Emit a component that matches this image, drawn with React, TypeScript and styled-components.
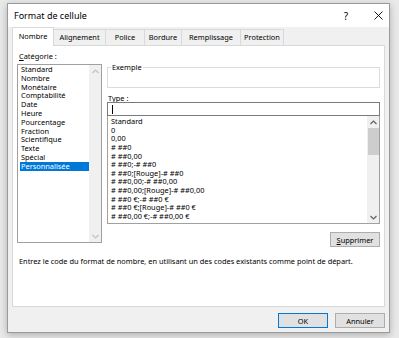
import React from 'react'
import styled, { createGlobalStyle } from 'styled-components'

const categories = [
  'Standard',
  'Nombre',
  'Monétaire',
  'Comptabilité',
  'Date',
  'Heure',
  'Pourcentage',
  'Fraction',
  'Scientifique',
  'Texte',
  'Spécial',
  'Personnalisée',
]

const formats = [
  'Standard',
  '0',
  '0,00',
  '# ##0',
  '# ##0,00',
  '# ##0;-# ##0',
  '# ##0;[Rouge]-# ##0',
  '# ##0,00;-# ##0,00',
  '# ##0,00;[Rouge]-# ##0,00',
  '# ##0 €;-# ##0 €',
  '# ##0 €;[Rouge]-# ##0 €',
  '# ##0,00 €;-# ##0,00 €',
]

// widths read off the reference, borders overlap by 1px
const tabs = [
  { label: 'Nombre', width: 42 },
  { label: 'Alignement', width: 53 },
  { label: 'Police', width: 40 },
  { label: 'Bordure', width: 38 },
  { label: 'Remplissage', width: 60 },
  { label: 'Protection', width: 44 },
]

const Chevron = ({ up, color }: { up?: boolean; color: string }) => (
  <svg width="7" height="5" viewBox="0 0 7 5">
    <path
      d={up ? 'M0.5 4 L3.5 1 L6.5 4' : 'M0.5 1 L3.5 4 L6.5 1'}
      fill="none"
      stroke={color}
      strokeWidth="1.2"
    />
  </svg>
)

const App = () => {
  return (
    <>
      <GlobalStyle />
      <Window>
        <TitleBar>
          <Title>Format de cellule</Title>
          <TitleButton>?</TitleButton>
          <TitleButton>
            <svg width="9" height="9" viewBox="0 0 9 9">
              <path d="M0.5 0.5 L8.5 8.5 M8.5 0.5 L0.5 8.5" stroke="#000" strokeWidth="0.9" />
            </svg>
          </TitleButton>
        </TitleBar>
        <Body>
          <TabRow>
            {tabs.map((t, i) => (
              <Tab key={t.label} active={i === 0} w={t.width}>{t.label}</Tab>
            ))}
          </TabRow>
          <Panel>
            <Columns>
              <LeftColumn>
                <Label><u>C</u>atégorie :</Label>
                <CategoryList>
                  <Items>
                    {categories.map((c, i) => (
                      <CategoryItem key={c} selected={i === categories.length - 1}>{c}</CategoryItem>
                    ))}
                  </Items>
                  <Scrollbar>
                    <Arrow><Chevron up color="#c2c2c2" /></Arrow>
                    <Track />
                    <Arrow><Chevron color="#c2c2c2" /></Arrow>
                  </Scrollbar>
                </CategoryList>
              </LeftColumn>
              <RightColumn>
                <Sample>
                  <SampleLegend>Exemple</SampleLegend>
                  <SampleBody />
                </Sample>
                <TypeLabel>T<u>y</u>pe :</TypeLabel>
                <TypeInput>
                  <Caret />
                </TypeInput>
                <FormatList>
                  <FormatItems>
                    {formats.map(f => (
                      <FormatItem key={f}>{f}</FormatItem>
                    ))}
                  </FormatItems>
                  <Scrollbar>
                    <Arrow><Chevron up color="#606060" /></Arrow>
                    <Track>
                      <Thumb />
                    </Track>
                    <Arrow><Chevron color="#606060" /></Arrow>
                  </Scrollbar>
                </FormatList>
                <DeleteButton><u>S</u>upprimer</DeleteButton>
              </RightColumn>
            </Columns>
            <Info>
              Entrez le code du format de nombre, en utilisant un des codes existants comme point de départ.
            </Info>
          </Panel>
          <Footer>
            <Button primary>OK</Button>
            <Button>Annuler</Button>
          </Footer>
        </Body>
      </Window>
    </>
  )
}

const GlobalStyle = createGlobalStyle`
  html, body {
    margin: 0;
    padding: 0;
    background: #e9e9e9;
  }
  body {
    width: 399px;
    height: 338px;
    overflow: hidden;
    font-family: "Noto Sans", "Open Sans", sans-serif;
    font-size: 7.4px;
    color: #000;
  }
`
const Window = styled.div`
  margin: 3px 0 0 7px;
  width: 383px;
  height: 330px;
  box-sizing: border-box;
  border: 1px solid #9a9a9a;
  background: #f0f0f0;
  box-shadow: 0 2px 7px rgba(0, 0, 0, 0.25);
  display: flex;
  flex-direction: column;
`
const TitleBar = styled.div`
  height: 23px;
  flex: none;
  background: #fff;
  display: flex;
  align-items: center;
  padding: 0 1px 0 6px;
  gap: 12px;
`
const Title = styled.div`
  flex: 1;
  font-size: 9px;
`
const TitleButton = styled.div`
  width: 20px;
  display: flex;
  justify-content: center;
  font-size: 10px;
`
const Body = styled.div`
  flex: 1;
  display: flex;
  flex-direction: column;
  padding: 0 4px;
`
const TabRow = styled.div`
  display: flex;
  align-items: flex-end;
  height: 18px;
`
const Tab = styled.div<{ active?: boolean; w: number }>`
  position: relative;
  z-index: ${p => (p.active ? 1 : 0)};
  width: ${p => p.w}px;
  height: ${p => (p.active ? 19 : 16)}px;
  margin-bottom: ${p => (p.active ? -1 : 0)}px;
  margin-left: -1px;
  &:first-child {
    margin-left: 0;
  }
  box-sizing: border-box;
  border: 1px solid #d9d9d9;
  border-bottom: none;
  background: ${p => (p.active ? '#fff' : '#f0f0f0')};
  display: flex;
  align-items: center;
  justify-content: center;
  line-height: 1;
`
const Panel = styled.div`
  height: 262px;
  box-sizing: border-box;
  border: 1px solid #d9d9d9;
  background: #fff;
  padding: 5px 4px 0 4px;
`
const Columns = styled.div`
  display: flex;
  gap: 5px;
`
const LeftColumn = styled.div`
  width: 85px;
  display: flex;
  flex-direction: column;
`
const Label = styled.div`
  line-height: 10px;
  padding-left: 2px;
`
const CategoryList = styled.div`
  margin-top: 3px;
  height: 179px;
  box-sizing: border-box;
  border: 1px solid #a0a0a0;
  display: flex;
`
const Items = styled.div`
  flex: 1;
  padding-left: 2px;
  overflow: hidden;
`
const CategoryItem = styled.div<{ selected?: boolean }>`
  line-height: 8.8px;
  height: 8.8px;
  padding-left: 1px;
  white-space: nowrap;
  background: ${p => (p.selected ? '#0078d7' : 'transparent')};
  color: ${p => (p.selected ? '#fff' : '#000')};
`
const Scrollbar = styled.div`
  width: 12px;
  flex: none;
  background: #f0f0f0;
  display: flex;
  flex-direction: column;
`
const Arrow = styled.div`
  height: 12px;
  display: flex;
  align-items: center;
  justify-content: center;
`
const Track = styled.div`
  flex: 1;
`
const Thumb = styled.div`
  height: 27px;
  margin: 0 0 0 1px;
  background: #cdcdcd;
`
const RightColumn = styled.div`
  width: 273px;
  display: flex;
  flex-direction: column;
`
const Sample = styled.fieldset`
  margin: 11px 0 0;
  padding: 0;
  min-inline-size: 0;
  border: 1px solid #dcdcdc;
`
const SampleLegend = styled.legend`
  margin-left: 3px;
  padding: 0 1px;
  line-height: 10px;
`
const SampleBody = styled.div`
  height: 15px;
`
const TypeLabel = styled.div`
  margin-top: 7px;
  line-height: 7px;
  padding-left: 1px;
`
const TypeInput = styled.div`
  height: 14px;
  box-sizing: border-box;
  border: 1px solid #7a7a7a;
  display: flex;
  align-items: center;
  padding-left: 4px;
`
const Caret = styled.span`
  width: 1px;
  height: 9px;
  background: #000;
`
const FormatList = styled.div`
  height: 108px;
  box-sizing: border-box;
  border: 1px solid #a0a0a0;
  border-top: none;
  display: flex;
`
const FormatItems = styled.div`
  flex: 1;
  padding: 1px 0 0 3px;
  overflow: hidden;
`
const FormatItem = styled.div`
  line-height: 8.65px;
  height: 8.65px;
  white-space: nowrap;
`
const Button = styled.div<{ primary?: boolean }>`
  width: 50px;
  height: 15px;
  box-sizing: border-box;
  border: 1px solid ${p => (p.primary ? '#0078d7' : '#adadad')};
  background: #e1e1e1;
  display: flex;
  align-items: center;
  justify-content: center;
`
const DeleteButton = styled(Button)`
  margin-top: 8px;
  align-self: flex-end;
`
const Info = styled.div`
  margin-top: 9px;
  line-height: 10px;
  padding-left: 2px;
  white-space: nowrap;
`
const Footer = styled.div`
  display: flex;
  justify-content: flex-end;
  gap: 7px;
  padding-top: 6px;
`

export default App
